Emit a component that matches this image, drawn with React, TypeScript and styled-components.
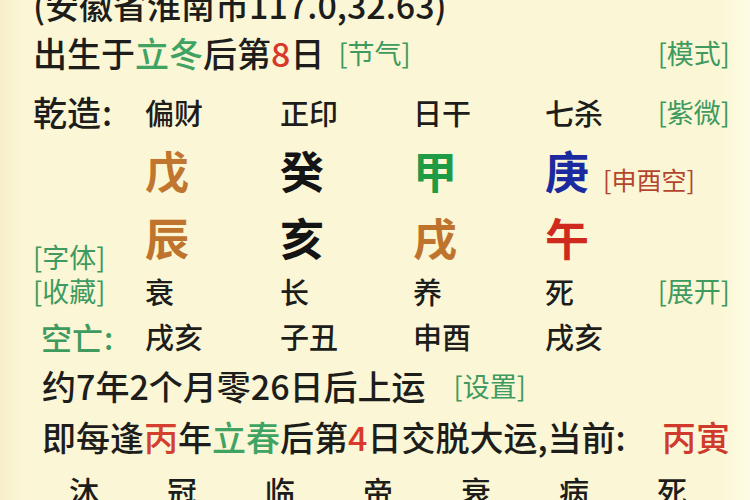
import React from "react";
import styled, { createGlobalStyle } from "styled-components";

const Global = createGlobalStyle`
  html, body { margin: 0; padding: 0; background: #fbf7d6; }
  body { font-family: "Noto Sans CJK SC", "Noto Sans", sans-serif; color: #1d1d1b; font-weight: 500; }
`;

const Page = styled.div`
  width: 750px;
  height: 500px;
  overflow: hidden;
  background: linear-gradient(90deg, #f8efca 0px, #fbf6d5 22px, #fbf7d6 720px, #fdfbe4 750px);
`;

const Sheet = styled.div`
  margin-top: -19px;
  display: flex;
  flex-direction: column;
`;

const Line = styled.div<{ $indent?: number; $h: number }>`
  display: flex;
  align-items: center;
  height: ${(p) => p.$h}px;
  padding-left: ${(p) => p.$indent ?? 33}px;
  padding-right: 20px;
  font-size: 34px;
  line-height: 1;
  white-space: nowrap;
`;

const Spacer = styled.span`
  flex: 1;
`;

const Tone = styled.span<{ $c: string }>`
  color: ${(p) => p.$c};
`;

const Link = styled.span<{ $c?: string; $gap?: number; $size?: number }>`
  color: ${(p) => p.$c ?? "#3e9a5f"};
  font-size: ${(p) => p.$size ?? 27}px;
  font-weight: 400;
  margin-left: ${(p) => p.$gap ?? 0}px;
  line-height: 28px;
  white-space: nowrap;
`;

const Chart = styled.div`
  display: grid;
  grid-template-columns: 112px 135px 133px 132px 48px 1fr;
  grid-template-rows: 70px 46px 78px 40px 50px;
  padding-left: 33px;
  padding-right: 20px;
  align-items: center;
  white-space: nowrap;
`;

const Title = styled.div<{ $c?: string; $size?: number; $pad?: number }>`
  font-size: ${(p) => p.$size ?? 34}px;
  color: ${(p) => p.$c ?? "#1d1d1b"};
  padding-left: ${(p) => p.$pad ?? 0}px;
  line-height: 1;
`;

const Colon = styled.span`
  margin-left: 1px;
`;

const Cell = styled.div`
  font-size: 29px;
  line-height: 1;
  color: #1d1d1b;
`;

const Stem = styled.div<{ $c: string; $drop?: number }>`
  font-size: 44px;
  font-weight: 700;
  line-height: 46px;
  color: ${(p) => p.$c};
  align-self: start;
  margin-top: ${(p) => p.$drop ?? 0}px;
`;

const EndLink = styled(Link)`
  justify-self: end;
`;

const LowLink = styled(Link)<{ $align?: string }>`
  align-self: end;
  justify-self: ${(p) => p.$align ?? "start"};
`;

const Stages = styled.div`
  display: flex;
  height: 54px;
  align-items: center;
  padding-left: 35px;
`;

const Stage = styled.span`
  width: 98px;
  text-align: center;
  font-size: 30px;
  line-height: 1;
`;

const pillars = [
  { god: "偏财", stem: "戊", sc: "#c0762f", branch: "辰", bc: "#bf742e", phase: "衰", void: "戌亥" },
  { god: "正印", stem: "癸", sc: "#141414", branch: "亥", bc: "#141414", phase: "长", void: "子丑" },
  { god: "日干", stem: "甲", sc: "#1f9a45", branch: "戌", bc: "#bf742e", phase: "养", void: "申酉" },
  { god: "七杀", stem: "庚", sc: "#1c2aa0", branch: "午", bc: "#cf2a1e", phase: "死", void: "戌亥" },
];

const stages = ["沐", "冠", "临", "帝", "衰", "病", "死"];

export default function App() {
  return (
    <Page>
      <Global />
      <Sheet>
        <Line $h={48}>(安徽省淮南市117.0,32.63)</Line>
        <Line $h={48}>
          出生于<Tone $c="#3fa364">立冬</Tone>后第<Tone $c="#d8392c">8</Tone>日
          <Link $gap={14}>[节气]</Link>
          <Spacer />
          <Link>[模式]</Link>
        </Line>
        <Chart>
          <Title>
            乾造<Colon>:</Colon>
          </Title>
          {pillars.map((p) => (
            <Cell key={p.god}>{p.god}</Cell>
          ))}
          <EndLink>[紫微]</EndLink>

          <span />
          {pillars.map((p) => (
            <Stem key={p.god} $c={p.sc}>
              {p.stem}
            </Stem>
          ))}
          <LowLink $c="#b4452d" $size={25} $gap={10}>
            [申酉空]
          </LowLink>

          <LowLink>[字体]</LowLink>
          {pillars.map((p) => (
            <Stem key={p.god} $c={p.bc} $drop={21}>
              {p.branch}
            </Stem>
          ))}
          <span />

          <Link>[收藏]</Link>
          {pillars.map((p) => (
            <Cell key={p.god}>{p.phase}</Cell>
          ))}
          <EndLink>[展开]</EndLink>

          <Title $c="#3e9a5f" $size={31} $pad={8}>
            空亡<Colon>:</Colon>
          </Title>
          {pillars.map((p) => (
            <Cell key={p.god}>{p.void}</Cell>
          ))}
          <span />
        </Chart>
        <Line $h={50} $indent={42}>
          约7年2个月零26日后上运
          <Link $gap={28}>[设置]</Link>
        </Line>
        <Line $h={52} $indent={42}>
          即每逢<Tone $c="#d3402f">丙</Tone>年<Tone $c="#3fa364">立春</Tone>后第
          <Tone $c="#d8392c">4</Tone>日交脱大运,当前:
          <Spacer />
          <Tone $c="#cf3a2c">丙寅</Tone>
        </Line>
        <Stages>
          {stages.map((s, i) => (
            <Stage key={i}>{s}</Stage>
          ))}
        </Stages>
      </Sheet>
    </Page>
  );
}
